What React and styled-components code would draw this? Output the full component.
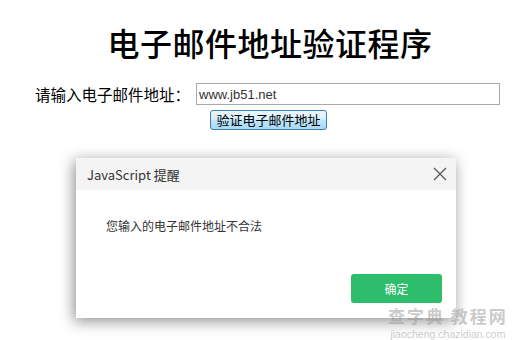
import React from "react";
import styled, { createGlobalStyle } from "styled-components";

const GlobalStyle = createGlobalStyle`
  html, body {
    margin: 0;
    padding: 0;
    background: #ffffff;
  }
  body {
    width: 523px;
    height: 340px;
    overflow: hidden;
    position: relative;
    font-family: "Noto Sans CJK SC", sans-serif;
  }
`;

const Page = styled.div`
  display: flex;
  flex-direction: column;
  align-items: center;
  padding: 22px 0 0 12px;
`;

const Title = styled.h1`
  margin: 0 0 0 5px;
  font-family: "Noto Sans CJK SC", serif;
  font-size: 32px;
  font-weight: 500;
  line-height: 40px;
  color: #000;
  letter-spacing: 0.5px;
`;

const FormRow = styled.div`
  display: flex;
  align-items: center;
  gap: 6px;
  margin-top: 21px;
`;

const Label = styled.label`
  font-size: 15.5px;
  color: #000;
  line-height: 22px;
`;

const Input = styled.input`
  box-sizing: border-box;
  width: 304px;
  height: 22px;
  padding: 0 2px;
  border: 1px solid #a9a9a9;
  font-family: "Liberation Sans", Arial, sans-serif;
  font-size: 13px;
  color: #333;
  outline: none;
`;

const SubmitButton = styled.button`
  box-sizing: border-box;
  margin-top: 5px;
  margin-left: 2px;
  width: 117px;
  height: 20px;
  padding: 0;
  border: 1px solid #3c7fb1;
  border-radius: 3px;
  background: linear-gradient(#eaf6fd 0%, #d9f0fc 45%, #bee6fd 50%, #a7d9f5 100%);
  font-family: "Noto Sans CJK SC", sans-serif;
  font-size: 13px;
  line-height: 18px;
  color: #000;
`;

const Dialog = styled.div`
  position: absolute;
  left: 76px;
  top: 158px;
  width: 380px;
  height: 160px;
  background: #fff;
  box-shadow: -2px 3px 14px rgba(0, 0, 0, 0.45);
  display: flex;
  flex-direction: column;
`;

const DialogHeader = styled.div`
  height: 32px;
  background: #f4f4f4;
  display: flex;
  align-items: center;
  justify-content: space-between;
  padding: 0 9px 0 11px;
  font-size: 13px;
  color: #333;
`;

const CloseIcon = styled.svg`
  width: 14px;
  height: 14px;
  display: block;
`;

const DialogBody = styled.div`
  flex: 1;
  padding: 27px 30px 0;
  font-size: 12px;
  color: #333;
`;

const DialogFooter = styled.div`
  display: flex;
  justify-content: flex-end;
  padding: 0 14px 15px 0;
`;

const ConfirmButton = styled.button`
  width: 91px;
  height: 29px;
  border: none;
  border-radius: 3px;
  background: #2dbd6b;
  color: #fff;
  font-family: "Noto Sans CJK SC", sans-serif;
  font-size: 12px;
`;

const Watermark = styled.div`
  position: absolute;
  left: 388px;
  top: 303px;
  display: flex;
  flex-direction: column;
  align-items: center;
  color: rgba(150, 150, 150, 0.5);
`;

const WatermarkTitle = styled.div`
  font-size: 17px;
  font-weight: 700;
  letter-spacing: 2px;
  line-height: normal;
`;

const WatermarkUrl = styled.div`
  font-family: "Liberation Sans", Arial, sans-serif;
  font-size: 10.5px;
  line-height: 12px;
`;

export default function App() {
  return (
    <>
      <GlobalStyle />
      <Page>
        <Title>电子邮件地址验证程序</Title>
        <FormRow>
          <Label>请输入电子邮件地址：</Label>
          <Input defaultValue="www.jb51.net" />
        </FormRow>
        <SubmitButton>验证电子邮件地址</SubmitButton>
      </Page>
      <Dialog>
        <DialogHeader>
          <span>JavaScript 提醒</span>
          <CloseIcon viewBox="0 0 14 14">
            <path d="M1 1 L13 13 M13 1 L1 13" stroke="#555" strokeWidth="1.2" fill="none" />
          </CloseIcon>
        </DialogHeader>
        <DialogBody>您输入的电子邮件地址不合法</DialogBody>
        <DialogFooter>
          <ConfirmButton>确定</ConfirmButton>
        </DialogFooter>
      </Dialog>
      <Watermark>
        <WatermarkTitle>查字典 教程网</WatermarkTitle>
        <WatermarkUrl>jiaocheng.chazidian.com</WatermarkUrl>
      </Watermark>
    </>
  );
}
